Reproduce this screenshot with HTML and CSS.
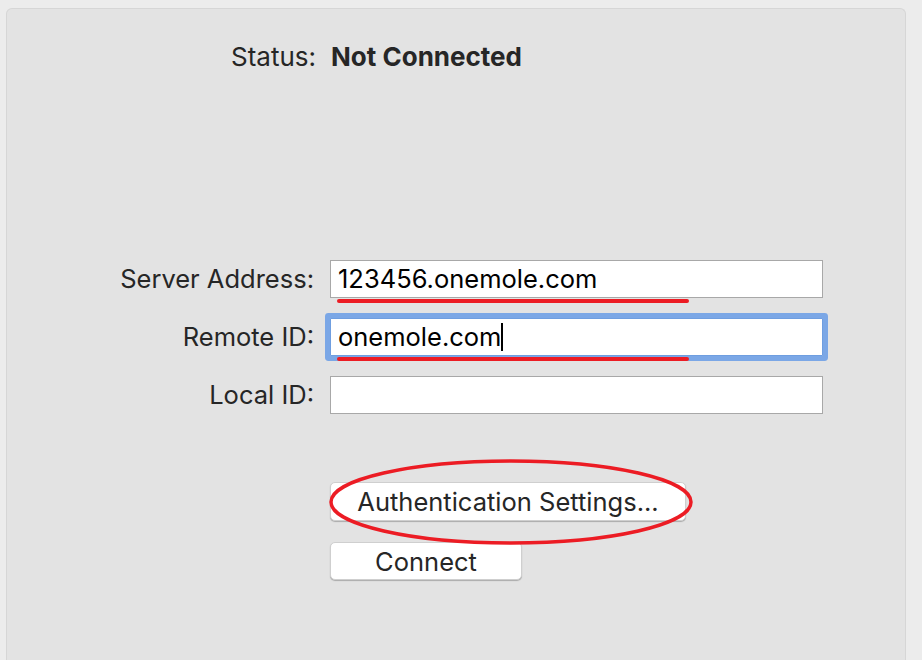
FILE: index.html
```html
<!DOCTYPE html>
<html lang="en">
<head>
  <meta charset="UTF-8" />
  <title>VPN</title>
  <link rel="stylesheet" href="styles.css">
</head>
<body>
  <div class="panel">
    <div class="status">
      <span class="status-label">Status:</span>
      <span class="status-value">Not Connected</span>
    </div>

    <div class="form">
      <label class="label">Server Address:</label>
      <div class="field">
        <span class="value">123456.onemole.com</span>
        <span class="mark mark-server"></span>
      </div>

      <label class="label">Remote ID:</label>
      <div class="field focused">
        <span class="value">onemole.com</span><span class="caret"></span>
        <span class="mark mark-remote"></span>
      </div>

      <label class="label">Local ID:</label>
      <div class="field"></div>
    </div>

    <div class="actions">
      <div class="btn-wrap">
        <button class="btn btn-auth">Authentication Settings...</button>
        <!-- red circle drawn over the button -->
        <svg class="circle" width="370" height="90" viewBox="0 0 370 90">
          <ellipse cx="185" cy="45" rx="180" ry="41" fill="none" stroke="#ec1c24" stroke-width="3.5" />
        </svg>
      </div>
      <button class="btn btn-connect">Connect</button>
    </div>
  </div>
</body>
</html>
```

FILE: styles.css
```css
:root {
  --bg: #ececec;
  --panel: #e3e3e3;
  --text: #262626;
  --red: #ec1c24;
  --focus: #7ba7e6;
}
* { box-sizing: border-box; }
html, body {
  height: 660px;
  overflow: hidden;
}
body {
  margin: 0;
  background: var(--bg);
  font-family: Inter, 'Liberation Sans', sans-serif;
  color: var(--text);
}
.panel {
  margin: 8px 16px 0 6px;
  height: 652px;
  background: var(--panel);
  border: 1px solid #d6d6d6;
  border-bottom: 0;
  border-radius: 6px 6px 0 0;
  padding-top: 33px;
}
.status {
  display: flex;
  gap: 15px;
  padding-left: 224px;
  font-size: 26px;
  line-height: 30px;
}
.status-value {
  font-weight: bold;
}
.form {
  display: grid;
  grid-template-columns: 307px 493px;
  column-gap: 16px;
  row-gap: 20px;
  margin-top: 188px;
}
.label {
  text-align: right;
  font-size: 25.5px;
  line-height: 38px;
}
.field {
  position: relative;
  height: 38px;
  background: #fff;
  border: 1px solid #a8a8a8;
  padding-left: 7px;
  font-size: 25.5px;
  line-height: 36px;
  color: #000;
  display: flex;
  align-items: center;
}
.field.focused {
  border-color: #6f9ee0;
  box-shadow: 0 0 0 5px var(--focus);
  border-radius: 1px;
}
.caret {
  width: 2px;
  height: 28px;
  background: #000;
}
.mark {
  position: absolute;
  left: 6px;
  height: 4px;
  background: var(--red);
  border-radius: 2px;
}
.mark-server {
  width: 352px;
  bottom: -6px;
}
.mark-remote {
  width: 352px;
  bottom: -6px;
}
.actions {
  display: flex;
  flex-direction: column;
  align-items: flex-start;
  gap: 21px;
  margin-top: 68px;
  padding-left: 323px;
}
.btn-wrap {
  position: relative;
}
.btn {
  font-family: inherit;
  font-size: 25.5px;
  color: var(--text);
  background: #fff;
  border: 1px solid #cfcfcf;
  border-radius: 5px;
  box-shadow: 0 1px 1px rgba(0,0,0,0.25);
  padding: 0;
}
.btn-auth {
  width: 356px;
  height: 39px;
}
.btn-connect {
  width: 192px;
  height: 38px;
}
.circle {
  position: absolute;
  left: -4px;
  top: -25px;
  pointer-events: none;
}
```
